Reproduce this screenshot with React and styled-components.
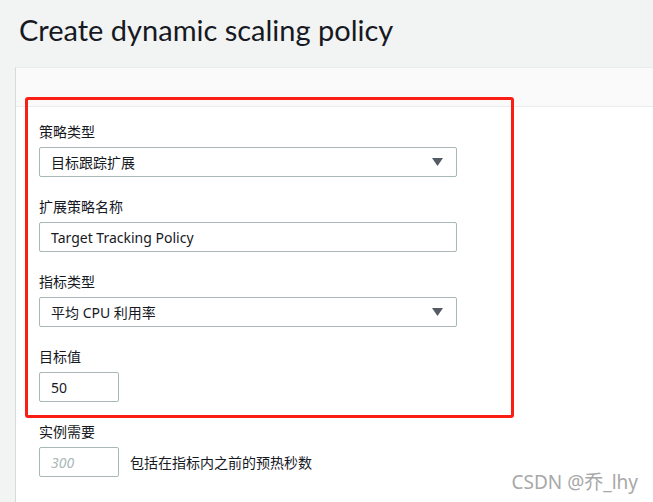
import React from "react";
import styled, { createGlobalStyle } from "styled-components";

const GlobalStyle = createGlobalStyle`
  html, body { margin: 0; padding: 0; }
  body {
    background: #f2f3f3;
    font-family: "Noto Sans", "Noto Sans CJK SC", sans-serif;
    color: #16191f;
  }
`;

const Page = styled.div`
  position: relative;
  width: 653px;
  height: 502px;
  overflow: hidden;
  background: #f2f3f3;
`;

const Title = styled.h1`
  margin: 0;
  height: 67px;
  box-sizing: border-box;
  padding: 13px 0 0 19px;
  font-family: "Lato", "Noto Sans", sans-serif;
  font-weight: 400;
  font-size: 29px;
  line-height: 34px;
  color: #16191f;
`;

const Panel = styled.section`
  margin-left: 15px;
  border-left: 1px solid #d5dbdb;
  border-top: 1px solid #eaeded;
  background: #ffffff;
  height: 440px;
`;

const PanelHeader = styled.div`
  height: 38px;
  background: #fafafa;
  border-bottom: 1px solid #eaeded;
`;

const PanelBody = styled.div`
  position: relative;
  padding: 16px 0 0 23px;
`;

const Field = styled.div`
  display: flex;
  flex-direction: column;
  gap: 6px;
  margin-bottom: 21px;
`;

const Label = styled.label`
  font-size: 14px;
  line-height: 18px;
  color: #16191f;
`;

const Box = styled.div`
  box-sizing: border-box;
  width: ${(p) => p.$width}px;
  height: 30px;
  border: 1px solid #aab7b8;
  border-radius: 2px;
  background: #fff;
  padding: 0 13px 0 11px;
  display: flex;
  align-items: center;
  justify-content: space-between;
  font-size: 14px;
  color: ${(p) => (p.$placeholder ? "#aab7b8" : "#16191f")};
  font-style: ${(p) => (p.$placeholder ? "italic" : "normal")};
`;

const Row = styled.div`
  display: flex;
  align-items: center;
  gap: 11px;
`;

const Hint = styled.span`
  font-size: 14px;
  color: #16191f;
`;

const Annotation = styled.div`
  position: absolute;
  left: 9px;
  top: -10px;
  width: 489px;
  height: 321px;
  box-sizing: border-box;
  border: 3px solid #fa1e14;
  border-radius: 3px;
  pointer-events: none;
`;

const Watermark = styled.div`
  position: absolute;
  right: 15px;
  bottom: 9px;
  font-size: 19px;
  line-height: 22px;
  color: #a8a8a8;
  text-shadow: 0 0 1px #fff;
`;

const Caret = () => (
  <svg width="11" height="8" viewBox="0 0 11 8">
    <path d="M0 0 H11 L5.5 8 Z" fill="#545b64" />
  </svg>
);

const Select = ({ value }) => (
  <Box $width={418}>
    <span>{value}</span>
    <Caret />
  </Box>
);

export default function App() {
  return (
    <>
      <GlobalStyle />
      <Page>
        <Title>Create dynamic scaling policy</Title>
        <Panel>
          <PanelHeader />
          <PanelBody>
            <Annotation />
            <Field>
              <Label>策略类型</Label>
              <Select value="目标跟踪扩展" />
            </Field>
            <Field>
              <Label>扩展策略名称</Label>
              <Box $width={418}>Target Tracking Policy</Box>
            </Field>
            <Field>
              <Label>指标类型</Label>
              <Select value="平均 CPU 利用率" />
            </Field>
            <Field>
              <Label>目标值</Label>
              <Box $width={80}>50</Box>
            </Field>
            <Field>
              <Label>实例需要</Label>
              <Row>
                <Box $width={80} $placeholder>300</Box>
                <Hint>包括在指标内之前的预热秒数</Hint>
              </Row>
            </Field>
          </PanelBody>
        </Panel>
        <Watermark>CSDN @乔_lhy</Watermark>
      </Page>
    </>
  );
}
